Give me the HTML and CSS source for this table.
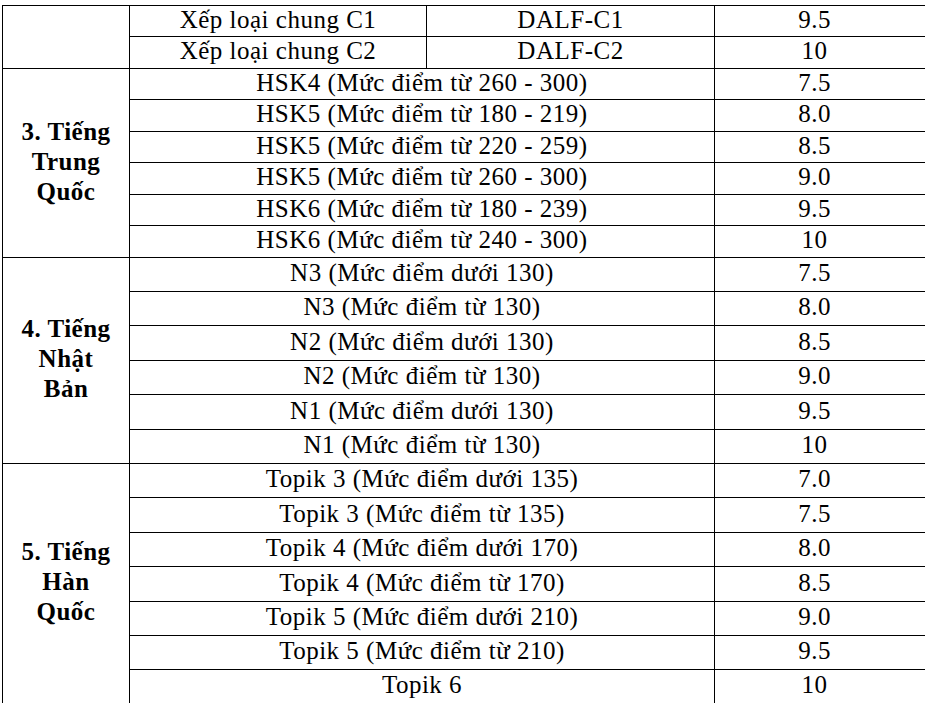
FILE: index.html
```html
<!DOCTYPE html>
<html lang="vi">
<head>
<meta charset="utf-8">
<title>Bảng quy đổi điểm</title>
<link rel="stylesheet" href="styles.css">
</head>
<body>
<div class="grid">
  <div class="cell lang r2"></div>
  <div class="cell subA">Xếp loại chung C1</div>
  <div class="cell subB">DALF-C1</div>
  <div class="cell val">9.5</div>
  <div class="cell subA">Xếp loại chung C2</div>
  <div class="cell subB">DALF-C2</div>
  <div class="cell val">10</div>

  <div class="cell lang r6"><span>3. Tiếng<br>Trung<br>Quốc</span></div>
  <div class="cell mid">HSK4 (Mức điểm từ 260 - 300)</div><div class="cell val">7.5</div>
  <div class="cell mid">HSK5 (Mức điểm từ 180 - 219)</div><div class="cell val">8.0</div>
  <div class="cell mid">HSK5 (Mức điểm từ 220 - 259)</div><div class="cell val">8.5</div>
  <div class="cell mid">HSK5 (Mức điểm từ 260 - 300)</div><div class="cell val">9.0</div>
  <div class="cell mid">HSK6 (Mức điểm từ 180 - 239)</div><div class="cell val">9.5</div>
  <div class="cell mid">HSK6 (Mức điểm từ 240 - 300)</div><div class="cell val">10</div>

  <div class="cell lang r6"><span>4. Tiếng<br>Nhật<br>Bản</span></div>
  <div class="cell mid">N3 (Mức điểm dưới 130)</div><div class="cell val">7.5</div>
  <div class="cell mid">N3 (Mức điểm từ 130)</div><div class="cell val">8.0</div>
  <div class="cell mid">N2 (Mức điểm dưới 130)</div><div class="cell val">8.5</div>
  <div class="cell mid">N2 (Mức điểm từ 130)</div><div class="cell val">9.0</div>
  <div class="cell mid">N1 (Mức điểm dưới 130)</div><div class="cell val">9.5</div>
  <div class="cell mid">N1 (Mức điểm từ 130)</div><div class="cell val">10</div>

  <div class="cell lang r7"><span>5. Tiếng<br>Hàn<br>Quốc</span></div>
  <div class="cell mid">Topik 3 (Mức điểm dưới 135)</div><div class="cell val">7.0</div>
  <div class="cell mid">Topik 3 (Mức điểm từ 135)</div><div class="cell val">7.5</div>
  <div class="cell mid">Topik 4 (Mức điểm dưới 170)</div><div class="cell val">8.0</div>
  <div class="cell mid">Topik 4 (Mức điểm từ 170)</div><div class="cell val">8.5</div>
  <div class="cell mid">Topik 5 (Mức điểm dưới 210)</div><div class="cell val">9.0</div>
  <div class="cell mid">Topik 5 (Mức điểm từ 210)</div><div class="cell val">9.5</div>
  <div class="cell mid">Topik 6</div><div class="cell val">10</div>
</div>
</body>
</html>
```
FILE: styles.css
```css
html, body {
  margin: 0;
  padding: 0;
  background: #fff;
  overflow: hidden;
}
body {
  font-family: "Liberation Serif", "Times New Roman", serif;
  font-size: 25px;
  letter-spacing: 0.5px;
  color: #000;
}
.grid {
  display: grid;
  margin: 5px 0 0 2px;
  width: 960px;
  grid-template-columns: 127px 297px 288px 248px;
  grid-template-rows:
    31px 32px
    31px 32px 31px 32px 31px 32px
    34px 34px 35px 34px 35px 34px
    34px 35px 34px 35px 34px 34px 34px;
  border-top: 1px solid #000;
  border-left: 1px solid #000;
}
.cell {
  display: flex;
  align-items: center;
  justify-content: center;
  border-right: 1px solid #000;
  border-bottom: 1px solid #000;
  white-space: nowrap;
  line-height: 1;
  padding-bottom: 4px;
}
.lang {
  grid-column: 1;
  font-weight: bold;
  line-height: 30px;
  text-align: center;
  padding-bottom: 3px;
}
.r2 { grid-row: span 2; }
.r6 { grid-row: span 6; }
.r7 { grid-row: span 7; }
.subA { grid-column: 2; }
.subB { grid-column: 3; }
.mid { grid-column: 2 / span 2; }
.val {
  grid-column: 4;
  padding-right: 48px;
}
```
